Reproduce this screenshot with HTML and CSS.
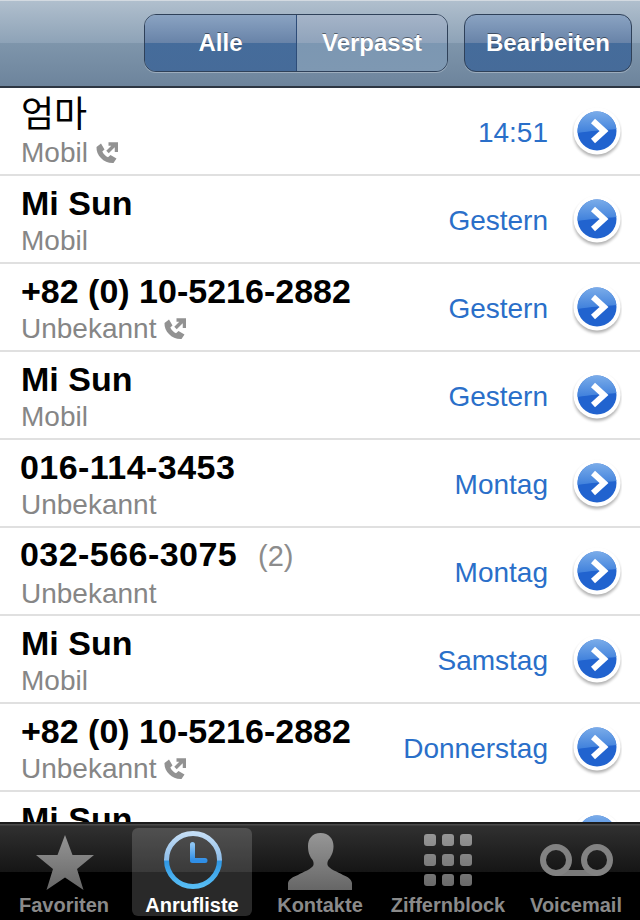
FILE: index.html
```html
<!DOCTYPE html>
<html lang="de">
<head>
<meta charset="utf-8">
<title>Anrufliste</title>
<link rel="stylesheet" href="styles.css">
</head>
<body>
<svg class="defs" width="0" height="0" aria-hidden="true">
  <defs>
    <linearGradient id="gloss" x1="0" y1="0" x2="0" y2="1"><stop offset="0" stop-color="#7aace9"/><stop offset="1" stop-color="#3f80dc"/></linearGradient>
    <linearGradient id="iconfill" gradientUnits="userSpaceOnUse" x1="0" y1="0" x2="0" y2="60"><stop offset="0" stop-color="#999"/><stop offset=".7" stop-color="#767676"/><stop offset="1" stop-color="#666"/></linearGradient>
    <linearGradient id="ring" x1="0" y1="0" x2="0" y2="1"><stop offset="0" stop-color="#c4def6"/><stop offset=".5" stop-color="#8ebde9"/><stop offset=".52" stop-color="#2f97e4"/><stop offset="1" stop-color="#57bdf5"/></linearGradient>
    <linearGradient id="hands" x1="0" y1="0" x2="0" y2="1"><stop offset="0" stop-color="#8cc4f2"/><stop offset="1" stop-color="#2f8ee6"/></linearGradient>
    <filter id="soft" x="-20%" y="-20%" width="140%" height="140%"><feGaussianBlur stdDeviation="1.500"/></filter>
    <symbol id="disc" viewBox="0 0 50 54">
      <circle cx="25" cy="27.500" r="23.500" fill="#000" opacity=".3" filter="url(#soft)"/>
      <circle cx="25" cy="25" r="23.500" fill="#fff"/>
      <circle cx="25" cy="25" r="19.500" fill="#2163cf"/>
      <path d="M5.600 27A19.500 19.500 0 1 1 44.400 23C33 24 17 25 5.600 27Z" fill="url(#gloss)"/>
      <path d="M21 15L32 25L21 35" fill="none" stroke="#fff" stroke-width="6"/>
    </symbol>
    <symbol id="outcall" viewBox="0 0 22 22">
      <path d="M0.500 5L5 1.500L8.500 7.500L6.300 9.500C7.300 12 9.500 14 12 15.300L14.500 13L20.500 16.500L17.500 21C8 21.500 0 13.500 0.500 5Z" fill="#929292"/>
      <path d="M11.500 10L18.500 3M12.500 2H20.500V10" fill="none" stroke="#929292" stroke-width="3.500"/>
    </symbol>
  </defs>
</svg>
<div class="app">
  <header class="navbar">
    <div class="segmented">
      <div class="seg seg-on">Alle</div>
      <div class="seg seg-off">Verpasst</div>
    </div>
    <div class="edit">Bearbeiten</div>
  </header>
  <main class="list">
    <div class="row">
      <div class="who"><div class="name plain">엄마</div><div class="sub">Mobil <svg class="callicon"><use href="#outcall"/></svg></div></div>
      <div class="when">14:51</div>
      <svg class="disc"><use href="#disc"/></svg>
    </div>
    <div class="row">
      <div class="who"><div class="name">Mi Sun</div><div class="sub">Mobil</div></div>
      <div class="when">Gestern</div>
      <svg class="disc"><use href="#disc"/></svg>
    </div>
    <div class="row">
      <div class="who"><div class="name">+82 (0) 10-5216-2882</div><div class="sub">Unbekannt <svg class="callicon"><use href="#outcall"/></svg></div></div>
      <div class="when">Gestern</div>
      <svg class="disc"><use href="#disc"/></svg>
    </div>
    <div class="row">
      <div class="who"><div class="name">Mi Sun</div><div class="sub">Mobil</div></div>
      <div class="when">Gestern</div>
      <svg class="disc"><use href="#disc"/></svg>
    </div>
    <div class="row">
      <div class="who"><div class="name num">016-114-3453</div><div class="sub">Unbekannt</div></div>
      <div class="when">Montag</div>
      <svg class="disc"><use href="#disc"/></svg>
    </div>
    <div class="row">
      <div class="who"><div class="name num">032-566-3075 <span class="count">(2)</span></div><div class="sub">Unbekannt</div></div>
      <div class="when">Montag</div>
      <svg class="disc"><use href="#disc"/></svg>
    </div>
    <div class="row">
      <div class="who"><div class="name">Mi Sun</div><div class="sub">Mobil</div></div>
      <div class="when">Samstag</div>
      <svg class="disc"><use href="#disc"/></svg>
    </div>
    <div class="row">
      <div class="who"><div class="name">+82 (0) 10-5216-2882</div><div class="sub">Unbekannt <svg class="callicon"><use href="#outcall"/></svg></div></div>
      <div class="when">Donnerstag</div>
      <svg class="disc"><use href="#disc"/></svg>
    </div>
    <div class="row">
      <div class="who"><div class="name">Mi Sun</div><div class="sub">Mobil</div></div>
      <div class="when">Mittwoch</div>
      <svg class="disc"><use href="#disc"/></svg>
    </div>
  </main>
  <nav class="tabbar">
    <div class="tab">
      <svg class="tabicon" viewBox="0 0 64 60"><path d="M33 5L40.500 25H62L45 39L51.500 60L33 47.500L14.500 60L21 39L4 25H25.500Z" fill="url(#iconfill)"/></svg>
      <span>Favoriten</span>
    </div>
    <div class="tab tab-on">
      <svg class="tabicon" viewBox="0 0 64 60">
        <circle cx="33" cy="30" r="26.500" fill="none" stroke="url(#ring)" stroke-width="5"/>
        <path d="M32.500 14.500V30.500H45" fill="none" stroke="url(#hands)" stroke-width="5" stroke-linecap="round" stroke-linejoin="round"/>
      </svg>
      <span>Anrufliste</span>
    </div>
    <div class="tab">
      <svg class="tabicon" viewBox="0 0 64 60"><path d="M32.500 3C41 3 45.500 9 45.500 16C45.500 22 43.500 25 42 28C40 30 39 32 39.500 35C41 39 50 42 55 45C60 47 63 49 64 53V60H0V53C1 49 5 47 10 45C15 42 24 39 25.500 35C26 32 25 30 23 28C21.500 25 20 22 20 16C20 9 24 3 32.500 3Z" fill="url(#iconfill)"/></svg>
      <span>Kontakte</span>
    </div>
    <div class="tab">
      <svg class="tabicon" viewBox="0 0 64 60" fill="url(#iconfill)">
        <rect x="8" y="4" width="12" height="12" rx="3"/><rect x="26" y="4" width="12" height="12" rx="3"/><rect x="44" y="4" width="12" height="12" rx="3"/>
        <rect x="8" y="24" width="12" height="12" rx="3"/><rect x="26" y="24" width="12" height="12" rx="3"/><rect x="44" y="24" width="12" height="12" rx="3"/>
        <rect x="8" y="44" width="12" height="12" rx="3"/><rect x="26" y="44" width="12" height="12" rx="3"/><rect x="44" y="44" width="12" height="12" rx="3"/>
      </svg>
      <span>Ziffernblock</span>
    </div>
    <div class="tab">
      <svg class="tabicon wide" viewBox="0 0 76 60"><path d="M17 43H59" stroke="#7a7a7a" stroke-width="6"/><circle cx="18" cy="30" r="13" fill="none" stroke="#828282" stroke-width="6"/><circle cx="59" cy="30" r="13" fill="none" stroke="#828282" stroke-width="6"/></svg>
      <span>Voicemail</span>
    </div>
  </nav>
</div>
</body>
</html>
```
FILE: styles.css
```css
* { box-sizing: border-box; }
html, body { margin: 0; padding: 0; }
body { font-family: "Liberation Sans", "Noto Sans CJK KR", sans-serif; background: #fff; }
.defs { display: block; height: 0; }
.app { width: 640px; height: 920px; display: flex; flex-direction: column; overflow: hidden; }

.navbar {
  flex: 0 0 88px; display: flex; justify-content: flex-end; align-items: flex-start;
  gap: 16px; padding: 13px 8px 0 0;
  border-top: 1px solid #d3dae1; border-bottom: 2px solid #2d3642;
  background: linear-gradient(#b0bfcd 0, #8da2b7 50%, #7e95ab 50%, #6d849c 100%);
}
.segmented {
  width: 304px; height: 58px; display: flex; border-radius: 12px; overflow: hidden;
  border: 1px solid #2f4159; box-shadow: 0 1px 0 rgba(255,255,255,.3);
}
.seg, .edit {
  display: flex; align-items: center; justify-content: center; color: #fff;
  font-size: 24px; font-weight: 700; text-shadow: 0 -1px 0 rgba(0,0,0,.45); padding-bottom: 1px;
}
.seg-on {
  width: 152px; border-right: 1px solid #2d4c78;
  background: linear-gradient(#8aa3c2 0, #6883a8 50%, #456c9b 50%, #466b99 100%);
}
.seg-off {
  flex: 1;
  background: linear-gradient(#a5b4c8 0, #8fa3bb 50%, #7c97b2 50%, #7e98b2 100%);
}
.edit {
  width: 168px; height: 58px; border-radius: 12px; border: 1px solid #2f4159;
  box-shadow: 0 1px 0 rgba(255,255,255,.3);
  background: linear-gradient(#8aa3c2 0, #6883a8 50%, #456c9b 50%, #466b99 100%);
}

.list { flex: 1; min-height: 0; overflow: hidden; background: #fff; }
.row {
  height: 88px; display: flex; align-items: center; padding: 0 18px 0 21px;
  border-bottom: 2px solid #e0e0e0;
}
.who { flex: 1; min-width: 0; padding-top: 4px; }
.name { font-size: 34px; font-weight: 700; line-height: 38px; color: #000; white-space: nowrap; }
.name.plain { font-weight: 400; font-size: 36px; }
.name.num { letter-spacing: .45px; margin-left: -1px; }
.count { font-weight: 400; font-size: 29px; letter-spacing: 0; color: #8c8c8c; margin-left: 11px; }
.sub { font-size: 28px; line-height: 34px; margin-top: 2px; color: #868686; display: flex; align-items: center; gap: 8px; }
.callicon { width: 22px; height: 22px; }
.when { font-size: 28px; color: #2a6fc9; margin-right: 24px; padding-top: 3px; }
.disc { width: 50px; height: 54px; flex: none; margin-top: 4px; }

.tabbar {
  flex: 0 0 98px; display: flex; padding: 4px 0 4px;
  border-top: 2px solid #1c1c1c;
  background: linear-gradient(#4a4a4a 0, #4a4a4a 1px, #303030 2px, #151515 48px, #000 48px, #000 100%);
}
.tab {
  flex: 1; margin: 0 4px; display: flex; flex-direction: column; align-items: center; border-radius: 6px;
  color: #8a8a8a; font-size: 20px; font-weight: 700; white-space: nowrap; padding-top: 2px;
}
.tab span { margin-top: 4px; line-height: 22px; }
.tab-on { color: #fff; background: rgba(255,255,255,.16); }
.tabicon { width: 64px; height: 60px; display: block; flex: none; }
.tabicon.wide { width: 76px; }
```
